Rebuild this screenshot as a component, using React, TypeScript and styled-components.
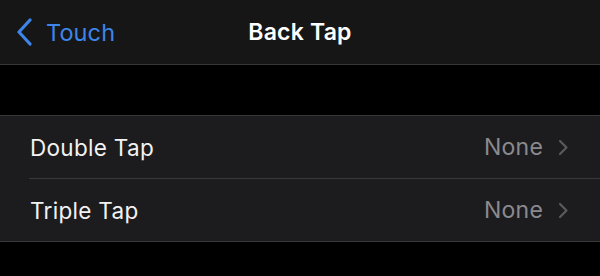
import React from 'react'
import styled, { createGlobalStyle } from 'styled-components'

const GlobalStyle = createGlobalStyle`
  html, body {
    margin: 0;
    padding: 0;
    background: #000;
  }
  body {
    font-family: Inter, "Noto Sans", "Liberation Sans", sans-serif;
    -webkit-font-smoothing: antialiased;
  }
`

const Screen = styled.div`
  width: 600px;
  height: 276px;
  background: #000;
  display: flex;
  flex-direction: column;
  overflow: hidden;
`

const NavBar = styled.div`
  height: 64px;
  background: #161616;
  border-bottom: 1px solid #363638;
  display: grid;
  grid-template-columns: 1fr auto 1fr;
  align-items: center;
  padding: 0 16px;
  flex-shrink: 0;
`

const BackButton = styled.div`
  display: flex;
  align-items: center;
  gap: 13px;
  color: #3d85e8;
  font-size: 23.5px;
  letter-spacing: 0.1px;
`

const Title = styled.div`
  color: #fff;
  font-size: 23px;
  font-weight: 600;
  letter-spacing: 0.2px;
`

const Gap = styled.div`
  height: 50px;
  flex-shrink: 0;
`

const Group = styled.div`
  background: #1c1c1e;
  border-top: 1px solid #38383a;
  border-bottom: 1px solid #38383a;
`

const Row = styled.div<{ divider?: boolean }>`
  height: 62px;
  display: flex;
  align-items: center;
  padding-left: 30px;
  position: relative;
  ${({ divider }) =>
    divider &&
    `
    &::after {
      content: '';
      position: absolute;
      left: 29px;
      right: 0;
      bottom: -1px;
      height: 1px;
      background: #38383a;
    }
  `}
  & + & {
    margin-top: 1px;
  }
`

const Label = styled.div`
  flex: 1;
  color: #f2f2f2;
  font-size: 22.5px;
  letter-spacing: 0.3px;
`

const Value = styled.div`
  display: flex;
  align-items: center;
  gap: 15px;
  padding-right: 31px;
  color: #8a8a8e;
  font-size: 23px;
  letter-spacing: 0.2px;
`

const BackChevron = () => (
  <svg width="17" height="28" viewBox="0 0 17 28">
    <path d="M14 2 L3 14 L14 26" fill="none" stroke="#3d85e8" strokeWidth="3.2" strokeLinecap="round" strokeLinejoin="round" />
  </svg>
)

const RowChevron = () => (
  <svg width="11" height="17" viewBox="0 0 11 17">
    <path d="M2 2 L8.5 8.5 L2 15" fill="none" stroke="#5a5a5e" strokeWidth="2.2" strokeLinecap="round" strokeLinejoin="round" />
  </svg>
)

const rows = [
  { label: 'Double Tap', value: 'None' },
  { label: 'Triple Tap', value: 'None' },
]

export default function App() {
  return (
    <Screen>
      <GlobalStyle />
      <NavBar>
        <BackButton>
          <BackChevron />
          Touch
        </BackButton>
        <Title>Back Tap</Title>
        <div />
      </NavBar>
      <Gap />
      <Group>
        {rows.map((r, i) => (
          <Row key={r.label} divider={i < rows.length - 1}>
            <Label>{r.label}</Label>
            <Value>
              {r.value}
              <RowChevron />
            </Value>
          </Row>
        ))}
      </Group>
    </Screen>
  )
}
